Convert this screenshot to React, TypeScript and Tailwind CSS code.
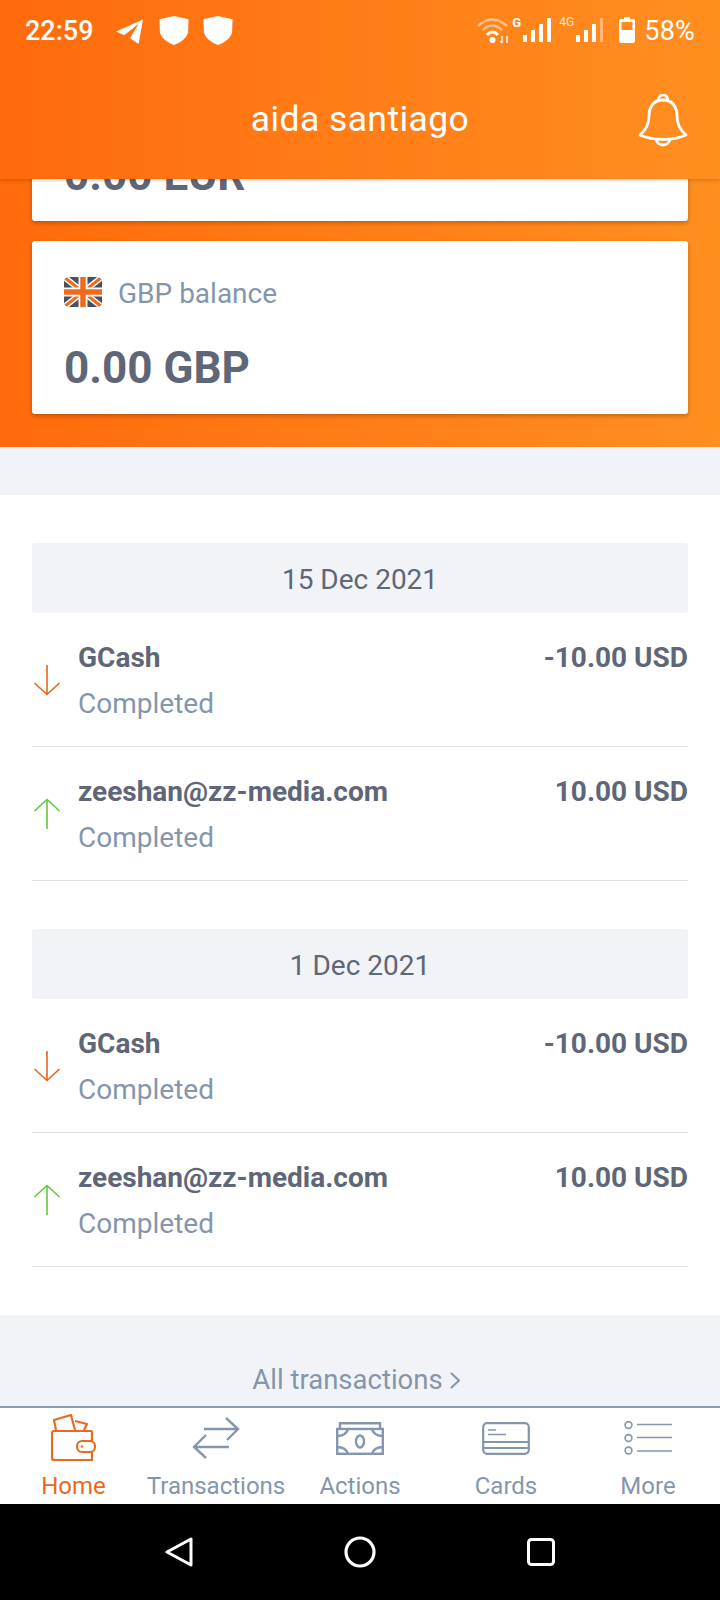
import React from 'react';

function Telegram() {
  return (
    <svg width="29" height="25" viewBox="0 0 29 26" fill="white">
      <path d="M0.5 13 L28.5 0.5 L24 26 L15 20 L24 5 L9 17 Z" />
    </svg>
  );
}

function Shield() {
  return (
    <svg width="30" height="31" viewBox="0 0 31 31" fill="white">
      <path d="M15.5 0.5 L30.5 4 L30 18 Q27 26 15.5 30.5 Q4 26 1 18 L0.5 4 Z" />
    </svg>
  );
}

function StatusRight() {
  return (
    <div className="flex items-center">
      <svg width="34" height="28" viewBox="0 0 32 28" fill="none" className="mr-[2px] -mt-[3px]">
        <path d="M1 10 Q15 -3 30 10" stroke="white" strokeOpacity="0.5" strokeWidth="2.5" />
        <path d="M6 14 Q15 5 25 14" stroke="white" strokeOpacity="0.5" strokeWidth="2.5" />
        <path d="M10 19 Q15.5 13 21 19" stroke="white" strokeWidth="3" />
        <circle cx="15.5" cy="24" r="3" fill="white" />
        <path d="M25 20 V27 M23 25 L25 27 M30 20 V27" stroke="white" strokeWidth="1.4" />
      </svg>
      <div className="relative w-[39px] h-[26px] -mt-[4px] flex items-end gap-[4px]">
        <span className="absolute left-[0px] top-[0px] text-[13px] font-bold leading-none text-white">G</span>
        <span className="w-[4px] h-[7px] bg-white ml-[11px]" />
        <span className="w-[4px] h-[12px] bg-white" />
        <span className="w-[4px] h-[18px] bg-white" />
        <span className="w-[4px] h-[24px] bg-white" />
      </div>
      <div className="relative ml-[8px] w-[45px] h-[26px] -mt-[4px] flex items-end gap-[4px]">
        <span className="absolute left-[0px] top-[0px] text-[12px] leading-none text-white/80">4G</span>
        <span className="w-[4px] h-[7px] bg-white ml-[17px]" />
        <span className="w-[4px] h-[12px] bg-white" />
        <span className="w-[4px] h-[18px] bg-white" />
        <span className="w-[3px] h-[24px] bg-white/40" />
      </div>
      <svg width="16" height="26" viewBox="0 0 16 26" className="ml-[15px] -mt-[3px]">
        <path d="M5 0 H11 V2 H14 Q16 2 16 4 V24 Q16 26 14 26 H2 Q0 26 0 24 V4 Q0 2 2 2 H5 Z" fill="white" />
        <rect x="2.5" y="5" width="11" height="8" fill="#ff8a1e" />
      </svg>
      <span className="ml-[9px] text-[27px] leading-none text-white tracking-[0.2px]">58%</span>
    </div>
  );
}

function Bell() {
  return (
    <svg width="50" height="54" viewBox="0 0 50 54" fill="none" stroke="white" strokeWidth="2.8" strokeLinejoin="round">
      <path d="M25 6 C14 6 11 15 11 22 C11 31 8 36 2 41 C16 47 34 47 48 41 C42 36 39 31 39 22 C39 15 36 6 25 6 Z" />
      <path d="M20.5 6.5 A4.6 4.6 0 1 1 29.5 6.5" />
      <path d="M18 45 C19 53 31 53 32 45" />
    </svg>
  );
}

function GbFlag() {
  return (
    <svg width="38" height="30" viewBox="0 0 38 30" className="rounded-[5px]">
      <rect width="38" height="30" fill="#4b4e5c" />
      <path d="M0 0 L38 30 M38 0 L0 30" stroke="white" strokeWidth="6" />
      <path d="M0 0 L38 30 M38 0 L0 30" stroke="#ee6a1f" strokeWidth="3" />
      <path d="M19 0 V30 M0 15 H38" stroke="white" strokeWidth="9" />
      <path d="M19 0 V30 M0 15 H38" stroke="#ee6a1f" strokeWidth="5.5" />
    </svg>
  );
}

function EuFlag() {
  return (
    <svg width="38" height="30" viewBox="0 0 38 30" className="rounded-[5px]">
      <rect width="38" height="30" fill="#3b5aa8" />
    </svg>
  );
}

function BalanceCard({ flag, label, amount }: { flag: React.ReactNode; label: string; amount: string }) {
  return (
    <div className="h-[173px] rounded-[3px] bg-white shadow-[0_2px_4px_rgba(0,0,0,0.25)] px-[32px] pt-[36px]">
      <div className="h-[30px] flex items-center gap-[16px]">
        {flag}
        <span className="pt-[4px] text-[28px] leading-[26px] text-[#8496ad]">{label}</span>
      </div>
      <div className="mt-[36px] text-[44px] leading-[50px] font-bold text-[#5f6677]">{amount}</div>
    </div>
  );
}

function Arrow({ up }: { up: boolean }) {
  return (
    <svg width="28" height="32" viewBox="0 0 28 32" fill="none" stroke={up ? '#62c940' : '#e8651e'} strokeWidth="1.6" className="shrink-0">
      {up ? <path d="M14 31 V1.5 M1.5 13 L14 1.5 L26.5 13" /> : <path d="M14 1 V30.5 M1.5 19 L14 30.5 L26.5 19" />}
    </svg>
  );
}

function TxRow({ name, amount, up }: { name: string; amount: string; up: boolean }) {
  return (
    <div className="flex items-center h-[134px] border-b border-[#dfe1e5]">
      <div className="w-[46px] flex pl-[1px]">
        <Arrow up={up} />
      </div>
      <div className="flex-1 flex flex-col gap-[17px] pt-[2px]">
        <div className="flex justify-between text-[28px] leading-[29px] font-bold text-[#5f6677]">
          <span>{name}</span>
          <span>{amount}</span>
        </div>
        <div className="text-[28px] leading-[29px] text-[#8496ad]">Completed</div>
      </div>
    </div>
  );
}

function DateBar({ label }: { label: string }) {
  return (
    <div className="h-[70px] pt-[4px] rounded-[3px] bg-[#f1f3f6] flex items-center justify-center text-[28px] text-[#5f6677]">
      {label}
    </div>
  );
}

function WalletIcon() {
  return (
    <svg width="46" height="48" viewBox="0 0 46 48" fill="none" stroke="#e8691f" strokeWidth="2.2" strokeLinejoin="round">
      <path d="M3 17 H40 Q41 17 41 18 V46 H4 Q1 46 1 44 V19 Q1 17 3 17 Z" fill="white" />
      <path d="M5 16 L3 6 L20 1 L24 16 M24 7 L36 10 L33 16" />
      <rect x="26" y="27" width="18" height="11" rx="5" fill="white" />
      <circle cx="31" cy="32.5" r="1.2" fill="#e8691f" stroke="none" />
    </svg>
  );
}

function TransferIcon() {
  return (
    <svg width="48" height="42" viewBox="0 0 48 42" fill="none" stroke="#8496ad" strokeWidth="2.4">
      <path d="M12 12 H46 M34 1 L46 12 L35 23 M37 30 H3 M14 18 L2 30 L14 41" />
    </svg>
  );
}

function CashIcon() {
  return (
    <svg width="48" height="33" viewBox="0 0 48 33" fill="none" stroke="#8496ad" strokeWidth="2.4">
      <path d="M4 7 V1.2 H44 V7" />
      <rect x="1.2" y="7" width="45.6" height="24.8" />
      <path d="M1 14 Q10 14 12 7 M47 14 Q38 14 36 7 M1 25 Q10 25 12 32 M47 25 Q38 25 36 32" />
      <ellipse cx="24" cy="19.5" rx="4" ry="6" />
    </svg>
  );
}

function CardIcon() {
  return (
    <svg width="48" height="33" viewBox="0 0 48 33" fill="none" stroke="#8496ad" strokeWidth="2.2">
      <rect x="1.2" y="1.2" width="45.6" height="30.6" rx="4" />
      <path d="M1 20 H47 M1 26 H47" />
      <path d="M6 8 H14 M6 12.5 H24" strokeWidth="1.6" />
    </svg>
  );
}

function MoreIcon() {
  return (
    <svg width="48" height="34" viewBox="0 0 48 34" fill="none" stroke="#8496ad" strokeWidth="1.6">
      <circle cx="4.5" cy="4" r="3.4" />
      <circle cx="4.5" cy="17" r="3.4" />
      <circle cx="4.5" cy="29.5" r="3.4" />
      <path d="M13 3.5 H48 M13 16.5 H48 M13 30 H48" />
    </svg>
  );
}

function NavItem({ icon, label, active, className }: { icon: React.ReactNode; label: string; active?: boolean; className: string }) {
  return (
    <div className={`flex flex-col items-center pt-[3px] ${className}`}>
      <div className="h-[54px] flex items-center justify-center">{icon}</div>
      <span className={`mt-[7px] text-[24px] leading-[28px] whitespace-nowrap ${active ? 'text-[#e8691f]' : 'text-[#8496ad]'}`}>{label}</span>
    </div>
  );
}

export default function App() {
  return (
    <div className="w-[720px] h-[1600px] flex flex-col overflow-hidden bg-[#f1f3f6] font-['Roboto',sans-serif]">
      <header className="relative z-10 h-[179px] shrink-0 bg-gradient-to-r from-[#ff6a0a] to-[#ff8f20] shadow-[0_2px_3px_rgba(0,0,0,0.15)]">
        <div className="flex items-center justify-between pl-[25px] pr-[25px] h-[62px]">
          <div className="flex items-center">
            <span className="text-[27px] leading-none text-white font-medium">22:59</span>
            <div className="ml-[21px]"><Telegram /></div>
            <div className="ml-[15px] -mt-[2px]"><Shield /></div>
            <div className="ml-[14px] -mt-[2px]"><Shield /></div>
          </div>
          <StatusRight />
        </div>
        <div className="relative mt-[30px] flex items-center justify-center h-[56px] text-[35.5px] text-white tracking-[0.4px]">
          aida santiago
          <div className="absolute right-[32px] top-[2px]"><Bell /></div>
        </div>
      </header>

      <main className="flex-1 min-h-0 overflow-hidden">
        <section className="-mt-[131px] px-[32px] pb-[33px] flex flex-col gap-[20px] bg-gradient-to-r from-[#ff6a0a] to-[#ff8f20]">
          <BalanceCard flag={<EuFlag />} label="EUR balance" amount="0.00 EUR" />
          <BalanceCard flag={<GbFlag />} label="GBP balance" amount="0.00 GBP" />
        </section>

        <section className="mt-[48px] bg-white px-[32px] pt-[48px] pb-[48px]">
          <DateBar label="15 Dec 2021" />
          <TxRow name="GCash" amount="-10.00 USD" up={false} />
          <TxRow name="zeeshan@zz-media.com" amount="10.00 USD" up />
          <div className="h-[48px]" />
          <DateBar label="1 Dec 2021" />
          <TxRow name="GCash" amount="-10.00 USD" up={false} />
          <TxRow name="zeeshan@zz-media.com" amount="10.00 USD" up />
        </section>

        <div className="pt-[49px] pr-[8px] flex items-center justify-center gap-[7px] text-[27.5px] leading-[32px] text-[#8496ad]">
          All transactions
          <svg width="10" height="17" viewBox="0 0 10 17" fill="none" stroke="#8496ad" strokeWidth="2">
            <path d="M1 1 L9 8.5 L1 16" />
          </svg>
        </div>
      </main>

      <nav className="relative z-10 h-[98px] shrink-0 bg-white border-t-2 border-[#8c9bb0] flex items-start">
        <NavItem icon={<WalletIcon />} label="Home" active className="w-[147px]" />
        <NavItem icon={<TransferIcon />} label="Transactions" className="w-[138px]" />
        <NavItem icon={<CashIcon />} label="Actions" className="w-[150px]" />
        <NavItem icon={<CardIcon />} label="Cards" className="w-[142px]" />
        <NavItem icon={<MoreIcon />} label="More" className="w-[142px]" />
      </nav>

      <div className="h-[96px] shrink-0 bg-black flex items-center justify-center gap-[151px]">
        <svg width="28" height="30" viewBox="0 0 28 30" fill="none" stroke="white" strokeWidth="3" strokeLinejoin="round">
          <path d="M26 2 V28 L2 15 Z" />
        </svg>
        <svg width="32" height="32" viewBox="0 0 32 32" fill="none" stroke="white" strokeWidth="3.2">
          <circle cx="16" cy="16" r="14" />
        </svg>
        <svg width="28" height="28" viewBox="0 0 28 28" fill="none" stroke="white" strokeWidth="3">
          <rect x="1.5" y="1.5" width="25" height="25" rx="3" />
        </svg>
      </div>
    </div>
  );
}
